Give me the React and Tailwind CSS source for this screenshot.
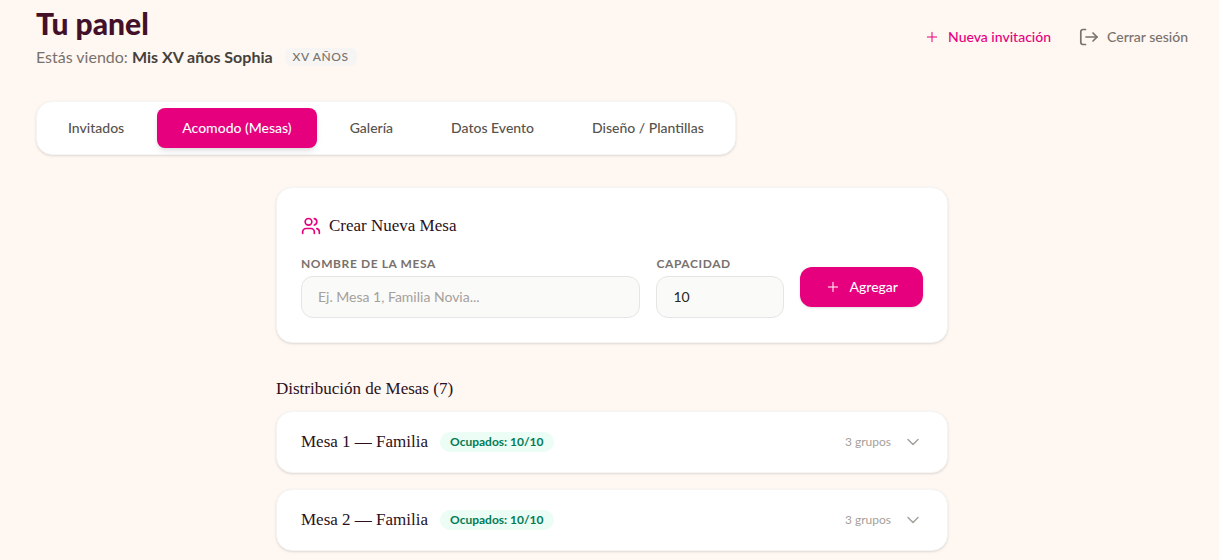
import { useState } from "react";
import { ChevronDown, Plus, Users } from "lucide-react";

const tabs = [
  "Invitados",
  "Acomodo (Mesas)",
  "Galería",
  "Datos Evento",
  "Diseño / Plantillas",
];

const tables = [
  { name: "Mesa 1 — Familia", used: 10, capacity: 10, groups: 3 },
  { name: "Mesa 2 — Familia", used: 10, capacity: 10, groups: 3 },
];

const LogoutIcon = () => (
  <svg
    className="size-5 shrink-0"
    viewBox="0 0 20 20"
    fill="none"
    stroke="currentColor"
    strokeWidth="1.7"
    strokeLinecap="round"
    strokeLinejoin="round"
    aria-hidden="true"
  >
    <path d="M6.5 17.5H4a2.200 2.200 0 0 1-2.200-2.200V4.700A2.200 2.200 0 0 1 4 2.500h2.500" />
    <path d="M7 10h11" />
    <path d="m14 6 4 4-4 4" />
  </svg>
);

const Header = () => (
  <header className="mb-8 flex items-center justify-between">
    <div>
      <h1 className="text-3xl font-black text-[#43102a]">Tu panel</h1>
      <div className="mt-1 flex items-center gap-3">
        <p className="text-base text-stone-500">
          Estás viendo:{" "}
          <span className="font-bold text-stone-700">Mis XV años Sophia</span>
        </p>
        <span className="rounded-md bg-[#f7f5f3] px-2 text-xs leading-[18px] font-medium tracking-wider text-stone-500 uppercase">
          XV años
        </span>
      </div>
    </div>
    <div className="flex items-center gap-7 text-sm font-medium">
      <button className="flex items-center gap-2 text-[#e6007e]">
        <Plus className="size-4" strokeWidth={1.5} />
        Nueva invitación
      </button>
      <button className="flex items-center gap-2 text-stone-500">
        <LogoutIcon />
        Cerrar sesión
      </button>
    </div>
  </header>
);

const TableForm = () => {
  const [name, setName] = useState("");
  const [capacity, setCapacity] = useState("10");

  return (
    <form
      className="rounded-2xl border border-stone-100 bg-white p-6 shadow-sm"
      onSubmit={(e) => e.preventDefault()}
    >
      <h2 className="mb-4 flex items-center gap-2 font-['Liberation_Serif',serif] text-[17px] leading-7 text-[#2b1020]">
        <Users className="size-5 text-[#e6007e]" />
        Crear Nueva Mesa
      </h2>
      <div className="flex items-center gap-4">
        <div className="min-w-0 flex-1">
          <label
            htmlFor="table-name"
            className="mb-1 block text-xs font-bold tracking-wider text-stone-500 uppercase"
          >
            Nombre de la mesa
          </label>
          <input
            id="table-name"
            type="text"
            value={name}
            onChange={(e) => setName(e.target.value)}
            placeholder="Ej. Mesa 1, Familia Novia..."
            className="block w-full rounded-xl border border-stone-200 bg-stone-50 px-4 py-2.5 text-sm text-stone-800 placeholder:text-stone-400"
          />
        </div>
        <div className="w-32">
          <label
            htmlFor="table-capacity"
            className="mb-1 block text-xs font-bold tracking-wider text-stone-500 uppercase"
          >
            Capacidad
          </label>
          <input
            id="table-capacity"
            type="number"
            value={capacity}
            onChange={(e) => setCapacity(e.target.value)}
            className="block w-full rounded-xl border border-stone-200 bg-stone-50 px-4 py-2.5 text-sm text-stone-800"
          />
        </div>
        <button
          type="submit"
          className="flex items-center gap-2 rounded-xl bg-[#e6007e] px-[25px] py-2.5 text-sm font-medium text-white shadow-sm"
        >
          <Plus className="size-4" strokeWidth={1.5} />
          Agregar
        </button>
      </div>
    </form>
  );
};

const TableRow = ({ table }) => (
  <button className="flex w-full items-center justify-between rounded-2xl border border-stone-100 bg-white px-6 py-4 shadow-sm">
    <span className="flex items-center gap-3">
      <span className="font-['Liberation_Serif',serif] text-[17px] leading-7 font-medium text-[#2b1020]">
        {table.name}
      </span>
      <span className="rounded-full bg-emerald-50 px-2.5 py-0.5 text-xs font-bold text-emerald-700">
        Ocupados: {table.used}/{table.capacity}
      </span>
    </span>
    <span className="flex items-center gap-3 text-xs text-stone-400">
      {table.groups} grupos
      <ChevronDown className="size-5" strokeWidth={1.8} />
    </span>
  </button>
);

const App = () => {
  const [activeTab, setActiveTab] = useState(1);

  return (
    <main className="min-h-screen bg-[#fff7f2] pt-[5px] pr-[31px] pb-2 pl-9 font-[Lato,sans-serif]">
      <Header />
      <nav className="flex w-fit gap-2 rounded-2xl border border-stone-100 bg-white p-1.5 shadow-sm">
        {tabs.map((tab, index) => (
          <button
            key={tab}
            onClick={() => setActiveTab(index)}
            className={`rounded-lg px-[25px] py-2.5 text-sm font-medium ${
              activeTab === index
                ? "bg-[#e6007e] text-white shadow-md"
                : "text-stone-600"
            }`}
          >
            {tab}
          </button>
        ))}
      </nav>
      <div className="mx-auto mt-8 max-w-2xl">
        <TableForm />
        <h2 className="mt-8 mb-2 font-['Liberation_Serif',serif] text-[17px] leading-7 text-[#2b1020]">
          Distribución de Mesas (7)
        </h2>
        <div className="flex flex-col gap-4">
          {tables.map((table) => (
            <TableRow key={table.name} table={table} />
          ))}
        </div>
      </div>
    </main>
  );
};

export default App;
